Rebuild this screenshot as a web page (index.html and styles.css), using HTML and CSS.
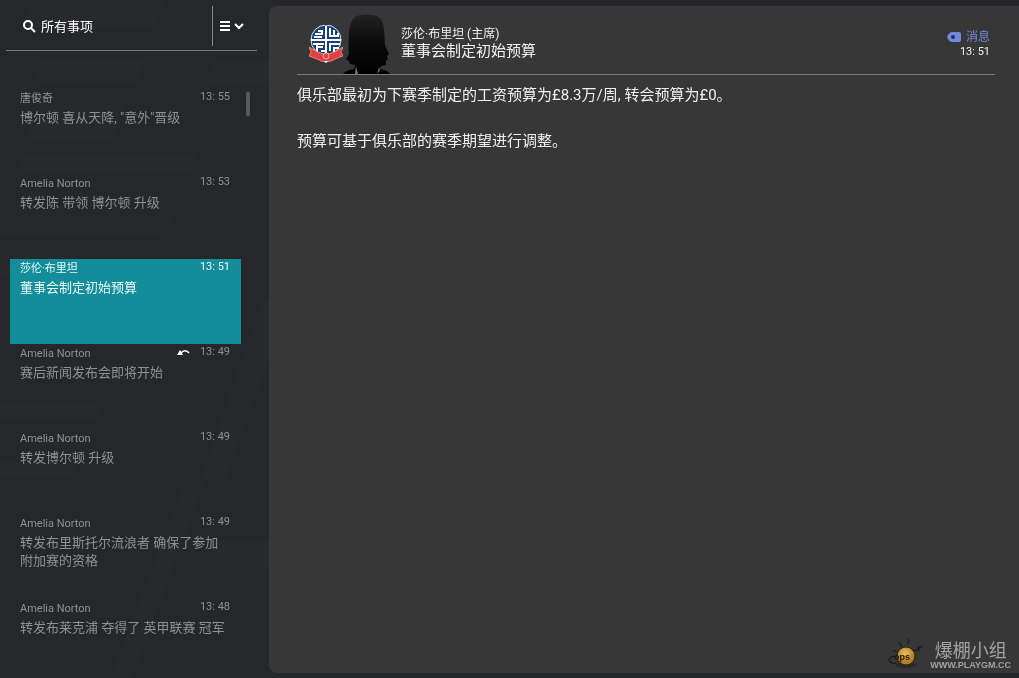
FILE: index.html
```
<!DOCTYPE html>
<html lang="zh-CN">
<head>
    <meta charset="UTF-8">
    <meta name="viewport" content="width=device-width, initial-scale=1.0">
    <title>收件箱</title>
    <link rel="stylesheet" href="styles.css">
</head>
<body>
    <svg class="backdrop" viewBox="0 0 1019 678" preserveAspectRatio="xMinYMin slice" aria-hidden="true">
        <path d="M32 0h134l-12 28H22zM42 58h104l-8 24H34zM36 105h88l-10 36H26zM26 154h172l-8 20H16zM0 216h173l-8 18H0zM0 256h74l-8 22H0zM0 402h105l-10 16H0zM0 462h80l-8 16H0zM214 60h55v26h-64zM214 540h55v28h-64z"/>
        <path d="M186 480h20l-74 198h-22zM262 300h7v60l-44 120h-24z"/>
    </svg>

    <div class="inbox">
        <aside class="sidebar">
            <div class="filter">
                <label class="search">
                    <svg width="13" height="13" viewBox="0 0 13 13"><circle cx="5" cy="5" r="4"/><path d="M8 8l4 4"/></svg>
                    <input type="text" value="所有事项" aria-label="搜索">
                </label>
                <button class="menu-btn" aria-label="菜单">
                    <svg width="25" height="10" viewBox="0 0 25 10"><path d="M0 1h10M0 5h10M0 9h10M15 3l4 4 4-4"/></svg>
                </button>
            </div>

            <div class="list-wrap">
                <ul class="mail-list">
                    <li class="mail">
                        <div class="mail-top"><span class="sender">唐俊奇</span><time>13: 55</time></div>
                        <a class="subject" href="#">博尔顿 喜从天降, "意外"晋级</a>
                    </li>
                    <li class="mail">
                        <div class="mail-top"><span class="sender">Amelia Norton</span><time>13: 53</time></div>
                        <a class="subject" href="#">转发陈 带领 博尔顿 升级</a>
                    </li>
                    <li class="mail selected">
                        <div class="mail-top"><span class="sender">莎伦·布里坦</span><time>13: 51</time></div>
                        <a class="subject" href="#">董事会制定初始预算</a>
                    </li>
                    <li class="mail">
                        <div class="mail-top">
                            <span class="sender">Amelia Norton</span>
                            <svg class="reply" width="13" height="8" viewBox="0 0 13 8"><path d="M0 6l3-5 3 5z" fill="#fff"/><path d="M4 4c2-3 6-3 8 0" fill="none" stroke="#fff" stroke-width="1.4"/></svg>
                            <time>13: 49</time>
                        </div>
                        <a class="subject" href="#">赛后新闻发布会即将开始</a>
                    </li>
                    <li class="mail">
                        <div class="mail-top"><span class="sender">Amelia Norton</span><time>13: 49</time></div>
                        <a class="subject" href="#">转发博尔顿 升级</a>
                    </li>
                    <li class="mail">
                        <div class="mail-top"><span class="sender">Amelia Norton</span><time>13: 49</time></div>
                        <a class="subject" href="#">转发布里斯托尔流浪者 确保了参加附加赛的资格</a>
                    </li>
                    <li class="mail">
                        <div class="mail-top"><span class="sender">Amelia Norton</span><time>13: 48</time></div>
                        <a class="subject" href="#">转发布莱克浦 夺得了 英甲联赛 冠军</a>
                    </li>
                </ul>
                <div class="scroll-thumb"></div>
            </div>
        </aside>

        <main class="message">
            <header class="message-head">
                <!-- club badge -->
                <svg class="badge" width="34" height="38" viewBox="0 0 34 38">
                    <circle cx="17" cy="15" r="15" fill="#17407c" stroke="#dfe6ef"/>
                    <g fill="none" stroke="#fff" stroke-width="2">
                        <path d="M2 15h30M17 1v28"/>
                        <path d="M9 6h4v3H6M5 12h8"/>
                        <path d="M21 3v9M25 5v7M29 8v4M20 11h10"/>
                        <path d="M4 19h11M8 22h6M8 19v8M12 26h4"/>
                        <path d="M31 19H21v7M30 23h-5v4"/>
                    </g>
                    <path d="M0 22l9 5q8 4 16 0l9-5-2 5 2 4-8 3q-9 6-18 0l-8-3 2-4z" fill="#e2423f" stroke="#f3a8a2" stroke-width=".7"/>
                    <circle cx="17" cy="31" r="3" fill="#e2423f" stroke="#f6c4bf" stroke-width=".8"/>
                    <path d="M15 36h4l-2 2z" fill="#fff"/>
                </svg>
                <!-- sender silhouette -->
                <svg class="avatar" width="50" height="60" viewBox="0 0 50 60">
                    <defs><linearGradient id="hair" x2="0" y2="1"><stop offset="0" stop-color="#222"/><stop offset=".5" stop-color="#0a0a0a"/><stop offset="1" stop-color="#000"/></linearGradient></defs>
                    <path d="M13 2q11-3 21 0 6 3 7 13l1 16 4 9-2 2 1 3-2 2v4l-5 1-1 3q7 1 10 5H0q3-4 11-5l1-4-5-1-1-3-3-2 3-5q-1-10 0-19 0-14 7-19z" fill="url(#hair)"/>
                    <path d="M13 52l2 8h-3zM36 53l1 3-3 4z" fill="#777"/>
                </svg>
                <div class="titles">
                    <div class="from">莎伦·布里坦 (主席)</div>
                    <h1>董事会制定初始预算</h1>
                </div>
                <div class="meta">
                    <a class="tag" href="#">
                        <svg width="14" height="10" viewBox="0 0 14 10"><path d="M5 0h7q2 0 2 2v6q0 2-2 2H5Q2 10 0 5 2 0 5 0z" fill="#7488dc"/><circle cx="6" cy="5" r="2" fill="#25304f"/></svg>
                        消息
                    </a>
                    <time>13: 51</time>
                </div>
            </header>
            <article class="message-body">
                <p>俱乐部最初为下赛季制定的工资预算为£8.3万/周, 转会预算为£0。</p>
                <p>预算可基于俱乐部的赛季期望进行调整。</p>
            </article>
        </main>
    </div>

    <div class="watermark">
        <svg width="38" height="34" viewBox="0 0 38 34">
            <defs><radialGradient id="face" cx=".45" cy=".35"><stop offset="0" stop-color="#e9bd62"/><stop offset="1" stop-color="#b57d22"/></radialGradient></defs>
            <path d="M5 12l5 3M11 4l3 5M21 1l-1 5M24 13l5-1 5-4M30 8l1 5M1 21q3-4 7-2M1 21q1 5 7 4" fill="none" stroke="#1c1c1c" stroke-width="1.3"/>
            <ellipse cx="18" cy="27" rx="11" ry="3" fill="#2a2a2a"/>
            <circle cx="18" cy="18" r="9" fill="url(#face)" stroke="#2a2315"/>
            <text x="6" y="22" class="oops">ops</text>
        </svg>
        <div class="watermark-text">
            <div class="group">爆棚小组</div>
            <div class="site">WWW.PLAYGM.CC</div>
        </div>
    </div>
</body>
</html>
```
FILE: styles.css
```
* {
    box-sizing: border-box;
}
body {
    margin: 0;
    background: #26272b;
    color: #f0f0f0;
    font-family: Roboto, "Noto Sans CJK SC", sans-serif;
    font-size: 13px;
}
a {
    color: inherit;
    text-decoration: none;
}
.backdrop {
    position: fixed;
    top: 0;
    left: 0;
    width: 100%;
    height: 100%;
    z-index: -1;
    fill: #28292d;
}
.inbox {
    display: flex;
    gap: 12px;
    height: 100vh;
    padding: 6px 0 5px 6px;
}

/* 左侧列表 */
.sidebar {
    flex: 0 0 251px;
    overflow: hidden;
}
.filter {
    display: flex;
    height: 45px;
    padding-bottom: 4px;
    border-bottom: 1px solid #777;
}
.search {
    flex: 1;
    display: flex;
    align-items: center;
    gap: 5px;
    padding-left: 17px;
}
.search svg {
    fill: none;
    stroke: #fff;
    stroke-width: 2;
}
.search input {
    flex: 1;
    min-width: 0;
    height: 20px;
    padding: 0 0 2px;
    border: none;
    background: none;
    color: #fff;
    font: inherit;
}
.menu-btn {
    width: 45px;
    padding: 0 0 0 7px;
    border: none;
    border-left: 1px solid #888;
    background: none;
    text-align: left;
}
.menu-btn svg {
    display: block;
    fill: none;
    stroke: #fff;
    stroke-width: 2;
}
.list-wrap {
    display: flex;
    gap: 5px;
    padding: 38px 7px 0 4px;
}
.mail-list {
    flex: 1;
    margin: 0;
    padding: 0;
    list-style: none;
}
.mail {
    height: 85px;
    padding: 0 11px 0 10px;
    color: #8f9093;
}
.mail.selected {
    background: #138d9a;
    color: #eafafa;
}
.mail-top {
    display: flex;
    align-items: flex-start;
    height: 20px;
    font-size: 11px;
}
.sender {
    flex: 1;
    line-height: 19px;
}
.mail-top time {
    line-height: 15px;
}
.reply {
    margin: 5px 10px 0 0;
}
.subject {
    display: block;
    line-height: 18px;
}
.scroll-thumb {
    width: 4px;
    height: 24px;
    margin-top: 3px;
    border-radius: 1px;
    background: #58595c;
}

/* 邮件内容 */
.message {
    flex: 1;
    padding: 8px 24px 20px 28px;
    border-radius: 8px 0 0 8px;
    background: #373737;
}
.message-head {
    display: flex;
    height: 61px;
    padding-left: 12px;
    border-bottom: 1px solid #7b7b7b;
}
.badge {
    margin-top: 11px;
}
.titles {
    flex: 1;
    padding: 12px 0 0 8px;
}
.from {
    font-size: 12px;
    line-height: 16px;
}
.titles h1 {
    margin: 0;
    font-size: 15px;
    font-weight: normal;
    line-height: 18px;
}
.meta {
    display: flex;
    flex-direction: column;
    align-items: flex-end;
    padding: 15px 5px 0 0;
    font-size: 11px;
}
.tag {
    display: flex;
    align-items: center;
    gap: 5px;
    color: #7488dc;
    font-size: 12px;
    line-height: 16px;
}
.meta time {
    line-height: 14px;
}
.message-body p {
    margin: 8px 0 22px;
    font-size: 15px;
    line-height: 24px;
}

/* 水印 */
.watermark {
    position: fixed;
    right: 8px;
    bottom: 6px;
    display: flex;
    gap: 4px;
    color: #a2a2a2;
}
.oops {
    font: bold 9px "Liberation Sans", sans-serif;
    fill: #221a0c;
}
.watermark-text {
    text-align: center;
}
.group {
    font-family: "Noto Sans CJK SC", sans-serif;
    font-size: 18px;
    line-height: 22px;
}
.site {
    font: bold 9px "Liberation Sans", sans-serif;
}
```
